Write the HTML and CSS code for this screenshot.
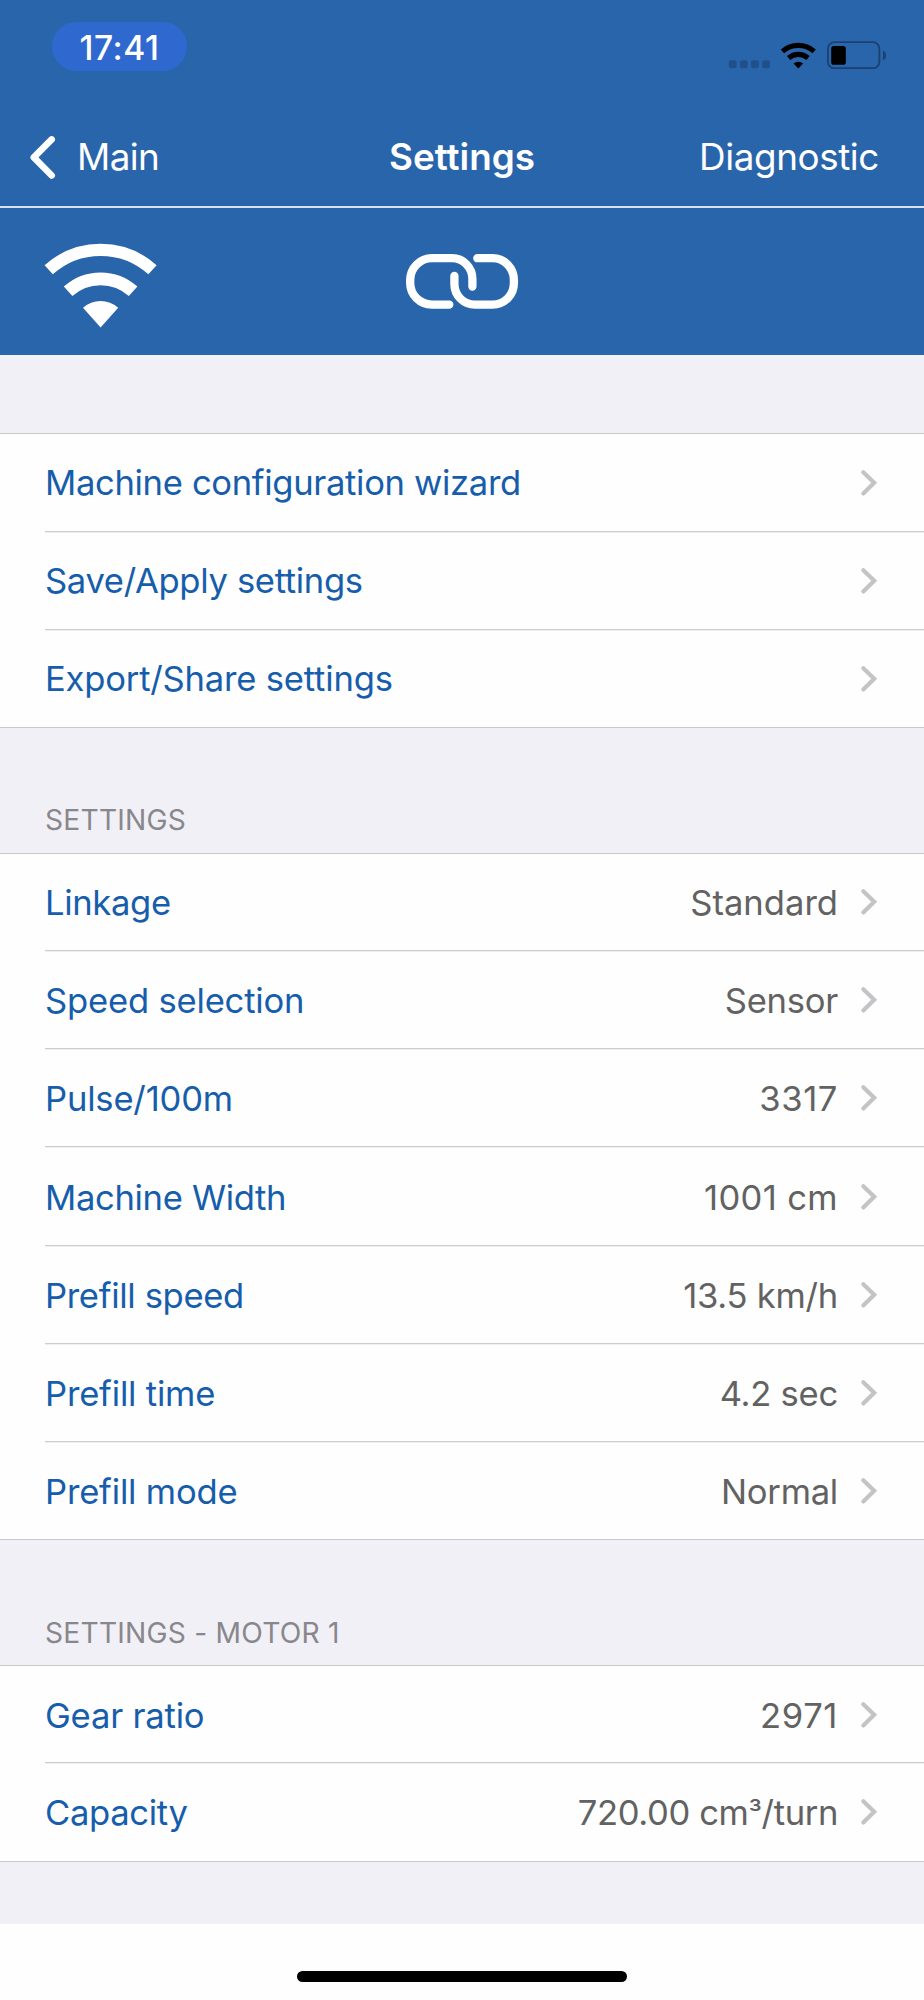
FILE: index.html
```html
<!DOCTYPE html>
<html lang="en">
<head>
<meta charset="utf-8">
<title>Settings</title>
<link rel="stylesheet" href="styles.css">
</head>
<body>
<svg class="defs" aria-hidden="true">
  <symbol id="chev" viewBox="0 0 18 28"><path d="M3.3 3.2 14.2 13.7 3.3 24.4" fill="none" stroke="#c4c4c6" stroke-width="4.2" stroke-linecap="round" stroke-linejoin="miter"/></symbol>
</svg>
<header class="top">
  <div class="status">
    <span class="time">17:41</span>
    <svg class="indicators" width="164" height="34" viewBox="726 38 164 34">
      <g fill="#205089">
        <rect x="728.8" y="60.2" width="7.8" height="8" rx="2.2"/>
        <rect x="739.9" y="60.2" width="7.8" height="8" rx="2.2"/>
        <rect x="751" y="60.2" width="7.8" height="8" rx="2.2"/>
        <rect x="762.2" y="60.2" width="7.8" height="8" rx="2.2"/>
      </g>
      <g fill="none" stroke="#000" stroke-width="5.1">
        <path d="M782.4 51.4A24 24 0 0 1 814.2 51.4"/>
        <path d="M788.6 58A14.8 14.8 0 0 1 808 58"/>
      </g>
      <path d="M793.5 63.5A7.5 7.5 0 0 1 803.1 63.5L798.3 68.4Z"/>
      <rect x="827.9" y="42.2" width="51.5" height="26" rx="6.5" fill="none" stroke="#1b4171" stroke-width="1.8"/>
      <rect x="831.2" y="46" width="14.6" height="18.8" rx="2.6"/>
      <path d="M883 50.8Q886 52 886 55.5Q886 59 883 60.2Z" fill="#1b4171"/>
    </svg>
  </div>
  <nav class="nav">
    <div class="back">
      <svg width="30" height="48" viewBox="28 132 30 48"><path d="M51.7 138.4 33.8 156.4 51.7 174.5" fill="none" stroke="#fff" stroke-width="6.6" stroke-linecap="round" stroke-linejoin="round"/></svg>
      <span class="main">Main</span>
    </div>
    <h1 class="title">Settings</h1>
    <span class="diag">Diagnostic</span>
  </nav>
  <div class="toolbar">
    <svg width="114" height="88" viewBox="43 241 114 88">
      <path d="M48.7 269.8A77.4 77.4 0 0 1 152.5 269.8" fill="none" stroke="#fff" stroke-width="12.2"/>
      <path d="M68.1 291.3A48.5 48.5 0 0 1 133.1 291.3" fill="none" stroke="#fff" stroke-width="12.8"/>
      <path d="M83 307.8A26.3 26.3 0 0 1 118.2 307.8L100.6 327.5Z" fill="#fff"/>
    </svg>
    <svg width="116" height="60" viewBox="404 251 116 60"><g fill="none" stroke="#fff" stroke-width="8.3" stroke-linecap="round"><path d="M449.3 304.6H432C420 304.6 410.2 295 410.2 283V280C410.2 268 420 258.2 432 258.2H452C463.5 258.2 472.4 267.5 472.4 279V286.5"/><path d="M454.4 275.9V284C454.4 295.5 463.5 304.6 475 304.6H492.5C504.5 304.6 513.9 295 513.9 283V280C513.9 268 504.5 258.2 492.5 258.2H477.3"/></g></svg>
  </div>
</header>
<main>
  <section class="group actions">
    <div class="row"><span class="label tight">Machine configuration wizard</span><svg class="chev"><use href="#chev"/></svg></div>
    <div class="row"><span class="label tight">Save/Apply settings</span><svg class="chev"><use href="#chev"/></svg></div>
    <div class="row"><span class="label">Export/Share settings</span><svg class="chev"><use href="#chev"/></svg></div>
  </section>
  <h2 class="heading">SETTINGS</h2>
  <section class="group">
    <div class="row"><span class="label tight">Linkage</span><span class="value name">Standard</span><svg class="chev"><use href="#chev"/></svg></div>
    <div class="row"><span class="label">Speed selection</span><span class="value unit">Sensor</span><svg class="chev"><use href="#chev"/></svg></div>
    <div class="row"><span class="label">Pulse/100m</span><span class="value digits">3317</span><svg class="chev"><use href="#chev"/></svg></div>
    <div class="row"><span class="label tight">Machine Width</span><span class="value width">1001 cm</span><svg class="chev"><use href="#chev"/></svg></div>
    <div class="row"><span class="label tight">Prefill speed</span><span class="value unit">13.5 km/h</span><svg class="chev"><use href="#chev"/></svg></div>
    <div class="row"><span class="label">Prefill time</span><span class="value unit">4.2 sec</span><svg class="chev"><use href="#chev"/></svg></div>
    <div class="row"><span class="label">Prefill mode</span><span class="value unit">Normal</span><svg class="chev"><use href="#chev"/></svg></div>
  </section>
  <h2 class="heading">SETTINGS - MOTOR 1</h2>
  <section class="group">
    <div class="row"><span class="label">Gear ratio</span><span class="value digits">2971</span><svg class="chev"><use href="#chev"/></svg></div>
    <div class="row"><span class="label tight">Capacity</span><span class="value volume">720.00 cm<span class="cube">³</span>/turn</span><svg class="chev"><use href="#chev"/></svg></div>
  </section>
</main>
<footer class="home"><div class="bar"></div></footer>
</body>
</html>
```

FILE: styles.css
```css
* { box-sizing: border-box; }
body {
  margin: 0;
  width: 924px;
  height: 2000px;
  display: flex;
  flex-direction: column;
  overflow: hidden;
  background: #fefefe;
  font-family: Inter, "Liberation Sans", sans-serif;
  font-size: 34.6px;
  color: #165dab;
}
.defs { position: absolute; width: 0; height: 0; }
.top { background: #2965ab; color: #fff; height: 354.5px; flex: none; }
.status {
  height: 108px;
  padding: 22px 34px 0 52px;
  display: flex;
  justify-content: space-between;
}
.time {
  width: 135px;
  height: 49px;
  line-height: 51px;
  border-radius: 25px;
  background: #2f69d0;
  text-align: center;
  font-size: 33.6px;
  font-weight: 450;
  letter-spacing: 0.5px;
}
.indicators { margin-top: 16px; }
.nav {
  height: 100px;
  padding: 0 45px;
  border-bottom: 2px solid #dfdfe1;
  display: grid;
  grid-template-columns: 1fr auto 1fr;
  align-items: center;
  font-size: 36.8px;
  line-height: 44px;
}
.back { display: flex; align-items: center; gap: 19px; margin-left: -17px; }
.main { letter-spacing: -0.6px; }
.title { margin: 0; font-size: 36.8px; font-weight: 600; }
.diag { text-align: right; letter-spacing: -0.4px; }
.toolbar {
  height: 146px;
  padding: 33px 43px 0;
  display: grid;
  grid-template-columns: 361px auto;
}
.toolbar svg:last-child { margin-top: 10px; }
main { background: #f1f0f6; height: 1569.5px; flex: none; padding-top: 78.5px; }
.group {
  background: #fefefe;
  border-top: 1px solid #c9c9cc;
  border-bottom: 1px solid #c9c9cc;
  padding-left: 45px;
}
.row {
  height: 98.2px;
  padding-right: 46px;
  display: flex;
  align-items: center;
}
.row:first-child { height: 96.5px; }
.row + .row {
  border-top: 1px solid #cdcdcf;
  box-shadow: inset 0 1px 0 #efeff0;
}
.label, .value { padding-top: 1px; line-height: 42px; }
.actions .label { padding: 0 0 1px; }
.label { letter-spacing: -0.19px; margin-right: auto; }
.label.tight { letter-spacing: -0.33px; }
.value { color: #626262; }
.value.unit { letter-spacing: -0.25px; }
.value.digits { letter-spacing: 0.6px; }
.value.width { letter-spacing: 0.35px; }
.value.volume { letter-spacing: -0.36px; }
.cube { font-size: 30px; line-height: 0; }
.chev { width: 18px; height: 28px; margin: 1px 0 0 22px; flex: none; }
.heading {
  margin: 0;
  height: 124.7px;
  padding: 75.5px 45px 0;
  font-size: 28.2px;
  line-height: 34px;
  font-weight: 400;
  letter-spacing: 0.22px;
  color: #88878c;
}
.home { flex: 1; padding-top: 47px; }
.bar { width: 330px; height: 11px; margin: 0 auto; border-radius: 6px; background: #000; }
```
